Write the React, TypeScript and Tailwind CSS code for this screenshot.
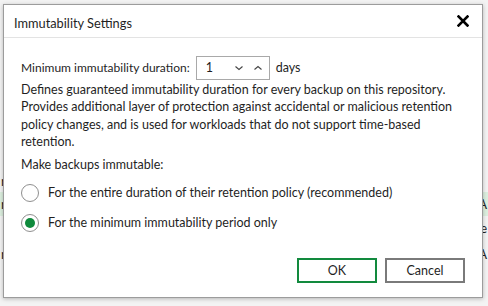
import { useState } from "react";

const font = { fontFamily: 'Lato, "Noto Sans", Arial, sans-serif' };

function Radio({ checked }: { checked: boolean }) {
  return (
    <span className="flex h-[18px] w-[18px] items-center justify-center rounded-full border border-[#8f8f8f] bg-white">
      {checked && <span className="h-[10px] w-[10px] rounded-full bg-[#0f8a3c]" />}
    </span>
  );
}

export default function App() {
  const [mode, setMode] = useState<"retention" | "minimum">("minimum");

  return (
    <div className="relative h-[306px] w-[488px] overflow-hidden bg-[#f3f3f3] text-[#1f1f1f]" style={font}>
      {/* Background app rows peeking out */}
      <div className="flex flex-col pt-[172px] text-[13px] leading-[18px]">
        <div className="h-[20px] px-[1px]">r</div>
        <div className="flex h-[24px] items-center justify-between bg-[#dcefdf] px-[1px]">
          <span>r</span>
          <span>A</span>
        </div>
        <div className="flex h-[24px] items-center justify-end px-[1px]">’e</div>
        <div className="flex h-[28px] items-center justify-between px-[1px]">
          <span>n</span>
          <span>A</span>
        </div>
      </div>

      {/* Dialog */}
      <div className="absolute left-[3px] top-[4px] flex h-[294px] w-[480px] flex-col border border-[#9c9c9c] bg-white shadow-[0_1px_4px_rgba(0,0,0,0.25)]">
        <div className="flex h-[33px] shrink-0 items-center justify-between border-b border-[#e3e3e3] pl-[10px] pr-[13px] pt-[5px]">
          <span className="text-[12.8px]">Immutability Settings</span>
          <svg width="12" height="12" viewBox="0 0 12 12" className="-mt-[5px]">
            <path d="M1.5 1.5 L10.5 10.5 M10.5 1.5 L1.5 10.5" stroke="#000" strokeWidth="2.6" strokeLinecap="square" />
          </svg>
        </div>

        <div className="flex flex-1 flex-col px-[17px] pt-[18px] text-[12.5px] leading-[17.4px]">
          <div className="flex items-center">
            <span className="text-[12px]">Minimum immutability duration:</span>
            <div className="ml-[6px] mr-[6px] flex h-[24px] w-[74px] items-center border border-[#a9a9a9] pl-[9px] pr-[6px]">
              <span className="flex-1">1</span>
              <svg width="10" height="8" viewBox="0 0 10 8" className="mr-[9px]">
                <path d="M1.5 2.5 L5 5.5 L8.5 2.5" fill="none" stroke="#444" strokeWidth="1.1" />
              </svg>
              <svg width="10" height="8" viewBox="0 0 10 8">
                <path d="M1.5 5.5 L5 2.5 L8.5 5.5" fill="none" stroke="#444" strokeWidth="1.1" />
              </svg>
            </div>
            <span>days</span>
          </div>
          <p className="mt-[1px]">
            Defines guaranteed immutability duration for every backup on this repository.
            <br />
            Provides additional layer of protection against accidental or malicious retention
            <br />
            policy changes, and is used for workloads that do not support time-based
            <br />
            retention.
          </p>

          <div className="mt-[5px]">Make backups immutable:</div>
          <label className="mt-[11px] flex items-center gap-[9px]" onClick={() => setMode("retention")}>
            <Radio checked={mode === "retention"} />
            <span>For the entire duration of their retention policy (recommended)</span>
          </label>
          <label className="mt-[12px] flex items-center gap-[9px]" onClick={() => setMode("minimum")}>
            <Radio checked={mode === "minimum"} />
            <span>For the minimum immutability period only</span>
          </label>

          <div className="mt-auto mb-[14px] flex justify-end gap-[8px]">
            <button className="h-[25px] w-[80px] border-2 border-[#128a3e] bg-white text-[12.5px]">OK</button>
            <button className="h-[25px] w-[80px] border-2 border-[#7a7a7a] bg-white text-[12.5px]">Cancel</button>
          </div>
        </div>
      </div>
    </div>
  );
}
